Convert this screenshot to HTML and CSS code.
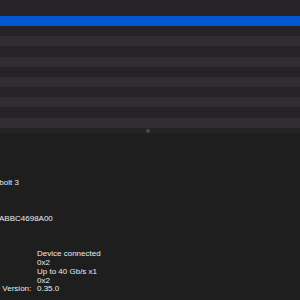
FILE: index.html
```html
<!DOCTYPE html>
<html>
  <head>
    <meta charset="utf-8" />
    <title>System Information</title>
    <link rel="stylesheet" href="styles.css">
  </head>
  <body>
    <div class="list">
      <div class="head"></div>
      <div class="row sel"></div>
      <div class="row"></div>
      <div class="row alt"></div>
      <div class="row"></div>
      <div class="row alt"></div>
      <div class="row"></div>
      <div class="row alt"></div>
      <div class="row"></div>
      <div class="row alt"></div>
      <div class="row"></div>
      <div class="row alt"></div>
      <div class="tail"></div>
    </div>

    <div class="splitter"><span class="grip"></span></div>

    <div class="detail">
      <p class="line name">Thunderbolt 3</p>
      <p class="line uid">ABBC4698A00</p>

      <div class="props">
        <span class="key">Status:</span>
        <span class="val">Device connected</span>
        <span class="key">Link Status:</span>
        <span class="val">0x2</span>
        <span class="key">Speed:</span>
        <span class="val">Up to 40 Gb/s x1</span>
        <span class="key">Current Link Width:</span>
        <span class="val">0x2</span>
        <span class="key">Link Controller Firmware Version:</span>
        <span class="val">0.35.0</span>
      </div>
    </div>
  </body>
</html>
```

FILE: styles.css
```css
html, body {
  margin: 0;
  padding: 0;
  height: 100%;
  overflow: hidden;
  background: #1e1e1e;
  font-family: "Liberation Sans", Arial, sans-serif;
}

.list {
  display: flex;
  flex-direction: column;
}
.head {
  height: 15.8px;
  background: #272226;
}
.row {
  height: 10.2px;
  background: #272226;
}
.row.alt {
  background: #322d31;
}
.row.sel {
  background: #0058d0;
}
.tail {
  height: 5px;
  background: #252224;
}

.splitter {
  position: relative;
  height: 0;
}
.grip {
  position: absolute;
  left: 146px;
  top: -4px;
  width: 4px;
  height: 4px;
  border-radius: 50%;
  background: #4a4a4a;
}

.detail {
  padding-top: 45px;
  color: #ececec;
  font-size: 8px;
  line-height: 9px;
}
.line {
  margin: 0;
  white-space: nowrap;
}
.name {
  margin-left: -30.5px;
}
.uid {
  margin-top: 27px;
  margin-left: -1px;
}

.props {
  display: grid;
  grid-template-columns: 119px auto;
  column-gap: 5px;
  row-gap: 0;
  margin-top: 27px;
  margin-left: -87px;
  line-height: 8.9px;
  white-space: nowrap;
}
```
